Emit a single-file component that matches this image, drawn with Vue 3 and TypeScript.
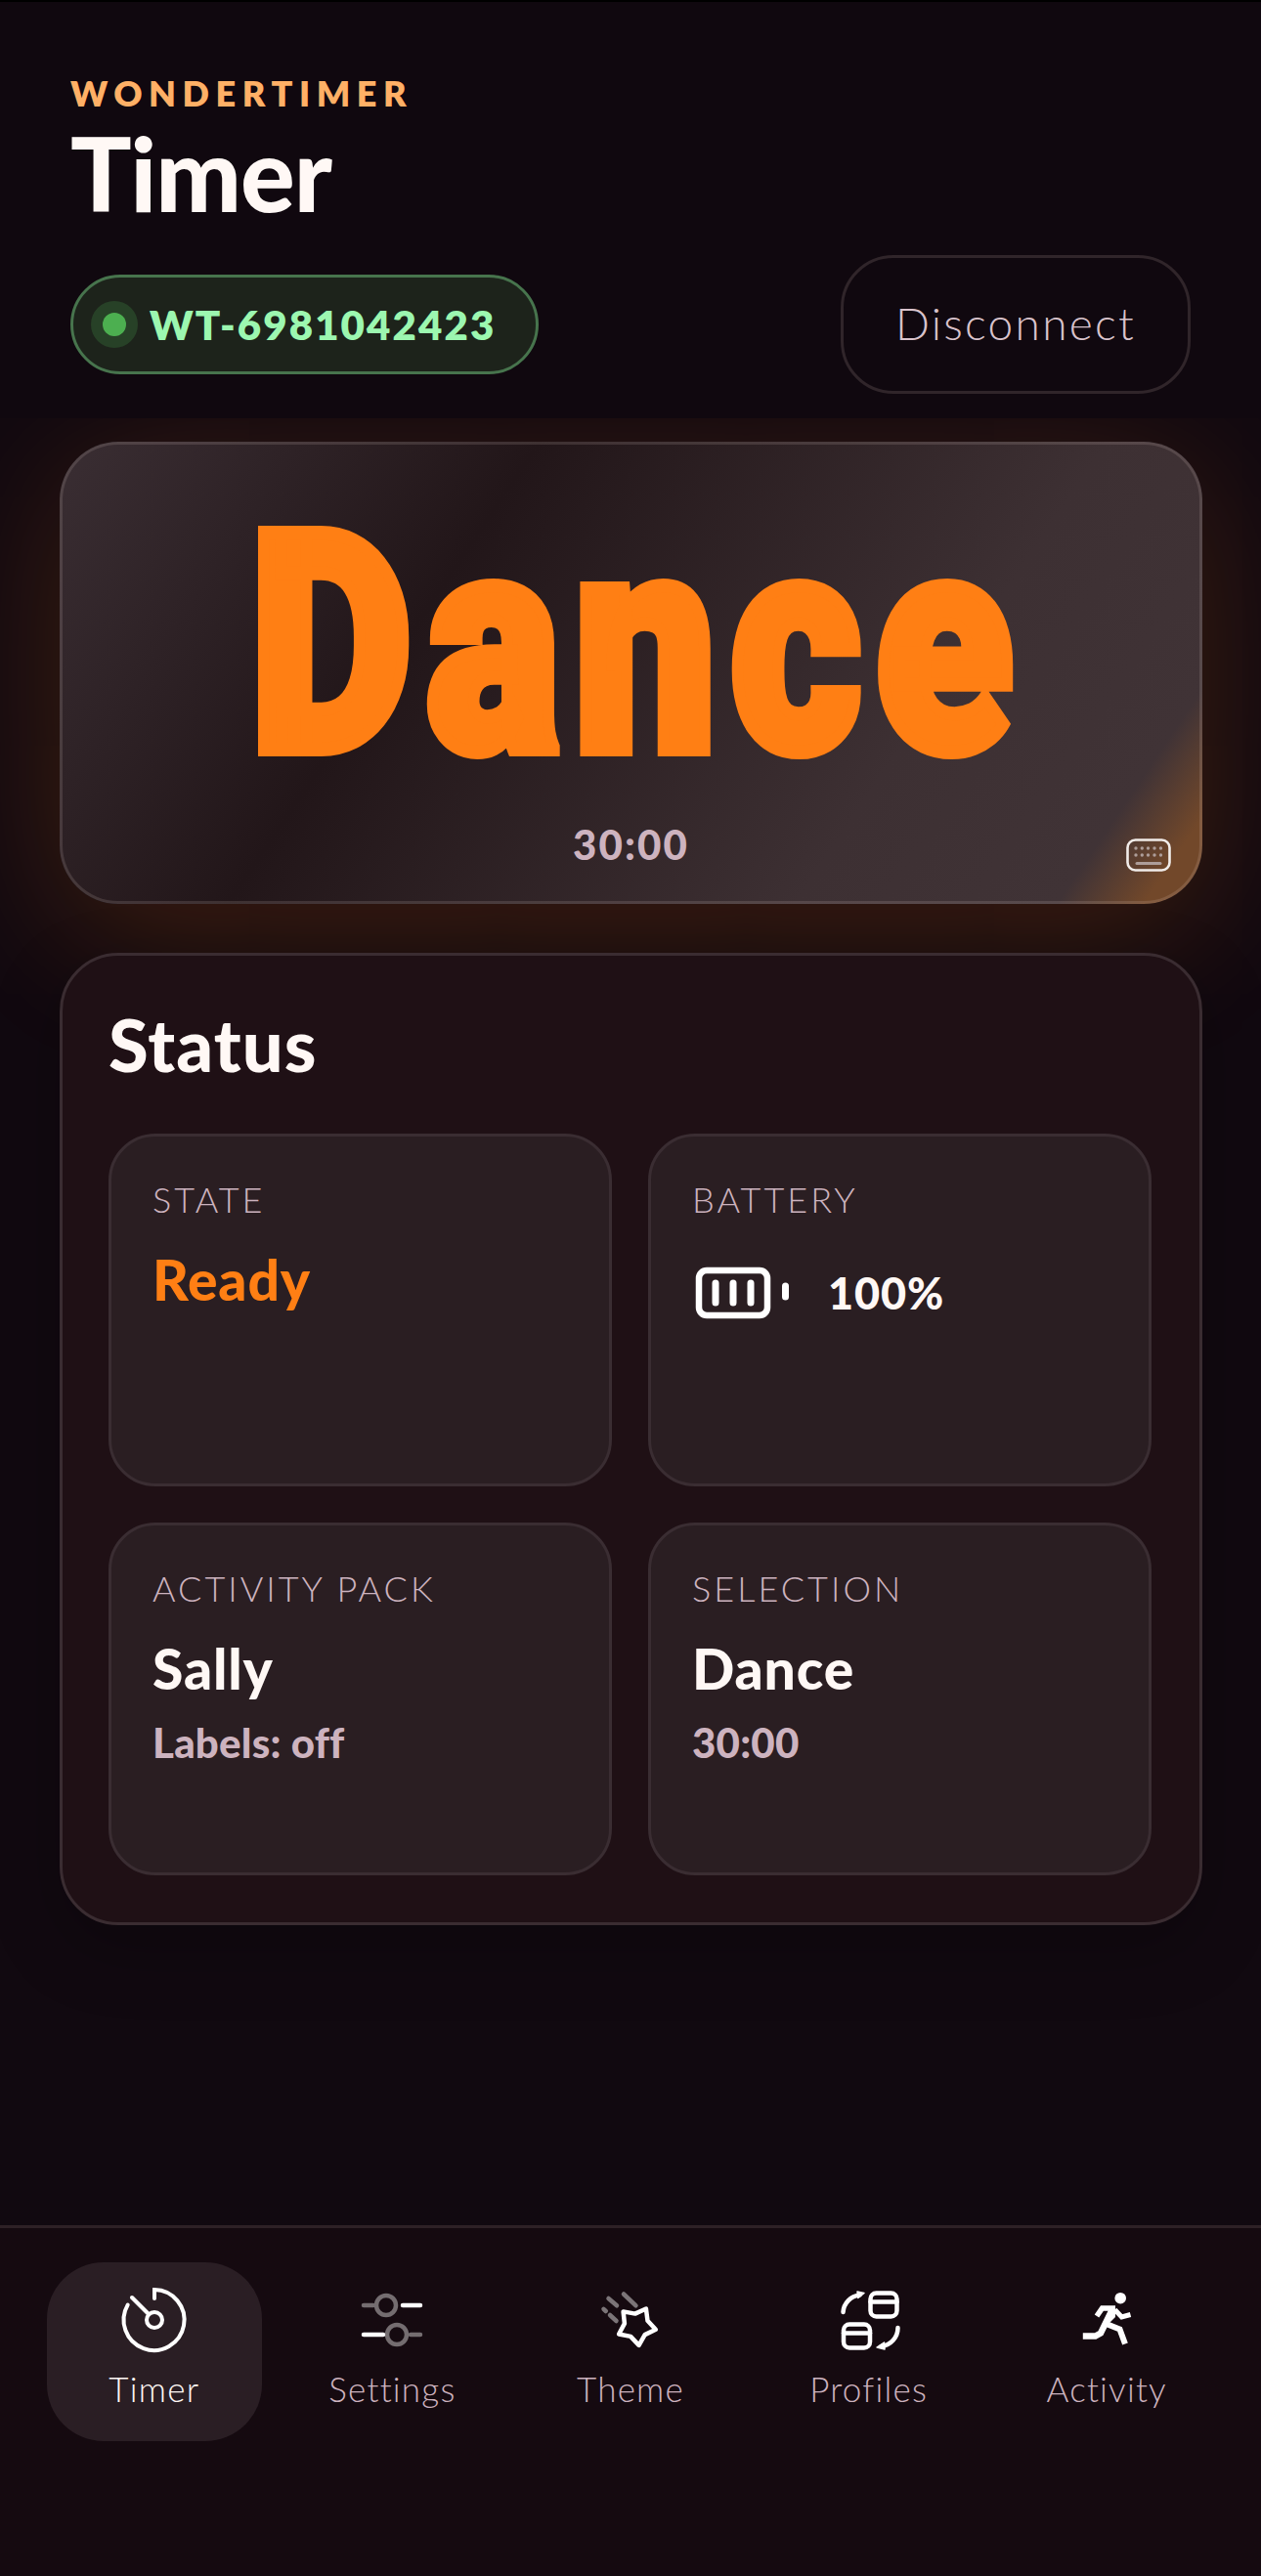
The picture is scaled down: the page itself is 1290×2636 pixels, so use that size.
<script setup lang="ts">
const keyXs: number[] = [10, 16.3, 22.5, 29, 35.5]
const keyYs: number[] = [10, 17]
</script>

<template>
  <div class="app">
    <header class="top">
      <p class="eyebrow">WONDERTIMER</p>
      <h1 class="title">Timer</h1>
      <div class="row">
        <div class="pill">
          <span class="dot"></span>
          <span class="pill-text">WT-6981042423</span>
        </div>
        <button class="disconnect">Disconnect</button>
      </div>
    </header>

    <main class="main">
      <section class="hero">
        <div class="hero-word"><span>Dance</span></div>
        <div class="hero-time">30:00</div>
        <svg class="kbd" width="46" height="34" viewBox="0 0 46 34" fill="none">
          <rect x="1.5" y="1.5" width="43" height="31" rx="8" stroke="#f1ece9" stroke-width="2.6" />
          <g v-for="y in keyYs" :key="y">
            <circle v-for="x in keyXs" :key="x" :cx="x" :cy="y" r="1.7" fill="#ad9d99" />
          </g>
          <path d="M11 25.5h24" stroke="#ad9d99" stroke-width="3" stroke-linecap="round" />
        </svg>
      </section>

      <section class="panel">
        <h2 class="panel-title">Status</h2>
        <div class="grid">
          <div class="card">
            <div class="label">STATE</div>
            <div class="value orange">Ready</div>
          </div>
          <div class="card">
            <div class="label">BATTERY</div>
            <div class="battery">
              <svg class="battery-icon" width="98" height="54" viewBox="0 0 98 54" fill="none">
                <rect x="4" y="4" width="70" height="46" rx="8" stroke="#fff" stroke-width="6.5" />
                <path d="M21 17v20M39 17v20M57 17v20" stroke="#fff" stroke-width="7" stroke-linecap="round" />
                <path d="M92.500 20v11" stroke="#fff" stroke-width="7" stroke-linecap="round" />
              </svg>
              <span class="battery-text">100%</span>
            </div>
          </div>
          <div class="card">
            <div class="label">ACTIVITY PACK</div>
            <div class="value">Sally</div>
            <div class="sub">Labels: off</div>
          </div>
          <div class="card">
            <div class="label">SELECTION</div>
            <div class="value">Dance</div>
            <div class="sub">30:00</div>
          </div>
        </div>
      </section>
    </main>

    <nav class="tabs">
      <div class="tab active">
        <svg class="icon" width="80" height="80" viewBox="0 0 80 80" fill="none" stroke="#fff" stroke-width="4" stroke-linecap="round">
          <path d="M40 18V9a31 31 0 1 1-27.300 15.500" />
          <path d="M17 17l17 17" />
          <circle cx="40" cy="40" r="8" />
        </svg>
        <span class="tab-label">Timer</span>
      </div>
      <div class="tab">
        <svg class="icon" width="80" height="80" viewBox="0 0 80 80" fill="none" stroke-width="4.500" stroke-linecap="round">
          <g stroke="#746d70">
            <path d="M11 25h10M59 55h10" />
            <circle cx="34" cy="25" r="10" />
            <circle cx="45" cy="55" r="10" />
          </g>
          <path d="M51 25h18M11 55h20" stroke="#fff" />
        </svg>
        <span class="tab-label">Settings</span>
      </div>
      <div class="tab">
        <svg class="icon" width="80" height="80" viewBox="0 0 80 80" fill="none" stroke-linecap="round" stroke-linejoin="round">
          <path d="M17.500 18l8.500 7.300M33 13.500l12.500 11.800M12.500 28.800l2.300 2.200M19 35l6.500 6" stroke="#7b7578" stroke-width="4.500" />
          <path d="M55.900 28.500L57.500 40.700 65.800 49.800 54.700 55.100 48.600 65.900 40.100 56.900 28.100 54.500 33.900 43.600 32.600 31.400 44.700 33.600z" stroke="#fff" stroke-width="4.500" />
        </svg>
        <span class="tab-label">Theme</span>
      </div>
      <div class="tab">
        <svg class="icon" width="80" height="80" viewBox="0 0 80 80" fill="none" stroke="#fff" stroke-width="4.500" stroke-linecap="round" stroke-linejoin="round">
          <rect x="41.500" y="12.500" width="27" height="24" rx="6" />
          <path d="M41.500 21.500h27" />
          <rect x="14" y="44.500" width="27" height="24" rx="6" />
          <path d="M14 53.500h27" />
          <path d="M13.500 32a19 19 0 0 1 17-17.500" />
          <path d="M69.500 48a19 19 0 0 1-17 19" />
          <path d="M35 12.500L28 11l.8 6.500z" fill="#fff" stroke-width="1.500" />
          <path d="M48 68l7.500-5 .5 7z" fill="#fff" stroke-width="1.500" />
        </svg>
        <span class="tab-label">Profiles</span>
      </div>
      <div class="tab">
        <svg class="icon" width="80" height="80" viewBox="0 0 80 80" fill="none" stroke="#fff" stroke-linejoin="miter">
          <circle cx="54.200" cy="17.700" r="5.800" fill="#fff" stroke="none" />
          <path d="M49 28H35.500L30 36" stroke-width="5.500" />
          <path d="M48.500 29.500L55.500 37l9-2.500" stroke-width="5" />
          <path d="M46 29L34 53.500l-5.500 3H15.800" stroke-width="6.500" />
          <path d="M41 44.500l12.500 5 5.500 15" stroke-width="6" />
          <path d="M44 29h5v8l-6 6z" fill="#fff" stroke="none" />
        </svg>
        <span class="tab-label">Activity</span>
      </div>
    </nav>
  </div>
</template>

<style>
html,
body {
  margin: 0;
  background: #100810;
}
</style>

<style scoped>
.app {
  width: 1290px;
  height: 2636px;
  display: flex;
  flex-direction: column;
  background: #100810;
  font-family: Lato, "Noto Sans", sans-serif;
  color: #fff8f5;
  overflow: hidden;
}

.top {
  height: 428px;
  box-sizing: border-box;
  flex: none;
  padding: 0 72px;
  border-top: 2px solid #000;
  background: #10080f;
  position: relative;
  z-index: 2;
}

.eyebrow {
  margin: 71px 0 0;
  font-size: 36px;
  line-height: 44px;
  font-weight: 800;
  letter-spacing: 0.182em;
  color: #ffb066;
}

.title {
  margin: 7px 0 0;
  font-size: 104px;
  line-height: 106px;
  font-weight: 900;
  letter-spacing: -0.01em;
  color: #fff8f5;
}

.row {
  display: flex;
  justify-content: space-between;
  align-items: center;
  margin-top: 31px;
}

.pill {
  box-sizing: border-box;
  width: 479px;
  height: 102px;
  display: flex;
  align-items: center;
  gap: 24px;
  padding-left: 30px;
  border: 3px solid #47744d;
  border-radius: 51px;
  background: #1d231b;
}

.dot {
  width: 24px;
  height: 24px;
  border-radius: 50%;
  background: #4caf50;
  box-shadow: 0 0 0 12px rgba(76, 175, 80, 0.22);
  flex: none;
}

.pill-text {
  font-size: 42px;
  font-weight: 800;
  letter-spacing: 0.05em;
  color: #9cf7b0;
}

.disconnect {
  box-sizing: border-box;
  width: 358px;
  height: 142px;
  padding: 0 0 4px;
  border: 3px solid #30252a;
  border-radius: 54px;
  background: transparent;
  font-family: inherit;
  font-size: 46px;
  font-weight: 300;
  letter-spacing: 0.05em;
  color: #d9c3cc;
}

.main {
  flex: 1;
  min-height: 0;
  overflow: hidden;
  box-sizing: border-box;
  padding: 24px 60px 0 61px;
  display: flex;
  flex-direction: column;
  gap: 50px;
  background: #110910;
}

.hero {
  position: relative;
  box-sizing: border-box;
  height: 473px;
  flex: none;
  border: 3px solid rgba(255, 235, 225, 0.13);
  border-radius: 60px;
  background-origin: border-box;
  background-image: linear-gradient(124deg, #3a2e33 0%, #221619 33%, #3d3033 72%, #403336 90%, #72482a 96%);
  box-shadow: 0 30px 150px rgba(255, 125, 20, 0.2);
}

.hero-word {
  position: absolute;
  left: 0;
  right: 0;
  top: 88px;
  height: 236px;
  display: flex;
  justify-content: center;
  align-items: center;
}

.hero-word span {
  display: block;
  padding-left: 16px;
  font-family: Roboto, Inter, sans-serif;
  font-size: 262px;
  line-height: 184px;
  font-weight: 900;
  letter-spacing: 16px;
  color: #ff7f14;
  -webkit-text-stroke: 12px #ff7f14;
  transform: scale(0.975, 1.19);
}

.hero-time {
  position: absolute;
  left: 0;
  right: 0;
  top: 385px;
  text-align: center;
  font-size: 42px;
  line-height: 48px;
  font-weight: 900;
  letter-spacing: 0.05em;
  color: #cdb3bf;
}

.kbd {
  position: absolute;
  right: 29px;
  bottom: 30px;
}

.panel {
  box-sizing: border-box;
  height: 995px;
  flex: none;
  padding: 47px 49px 0 47px;
  border: 3px solid #3a2c31;
  border-radius: 60px;
  background: #1f1015;
  box-shadow: 0 24px 70px rgba(0, 0, 0, 0.25);
  position: relative;
}

.panel-title {
  margin: 1px 0 48px;
  font-size: 74px;
  line-height: 86px;
  font-weight: 900;
  letter-spacing: 0.015em;
  color: #fff8f5;
}

.grid {
  display: grid;
  grid-template-columns: 1fr 1fr;
  grid-auto-rows: 361px;
  gap: 37px;
}

.card {
  box-sizing: border-box;
  padding: 42px 40px 0 42px;
  border: 3px solid #3a2d32;
  border-radius: 48px;
  background: #2a1e22;
}

.label {
  font-size: 36px;
  line-height: 44px;
  font-weight: 300;
  letter-spacing: 0.084em;
  color: #cdb3bf;
}

.value {
  margin-top: 27px;
  font-size: 57px;
  line-height: 66px;
  font-weight: 900;
  letter-spacing: 0.015em;
  color: #fff8f5;
}

.orange {
  color: #ff7f14;
}

.sub {
  margin-top: 20px;
  font-size: 42px;
  line-height: 46px;
  font-weight: 900;
  letter-spacing: 0.005em;
  color: #cdb3bf;
}

.battery {
  display: flex;
  align-items: center;
  margin-top: 47px;
  gap: 38px;
}

.battery-icon {
  margin-left: 3px;
}

.battery-text {
  font-size: 45px;
  line-height: 54px;
  font-weight: 900;
  letter-spacing: 0.02em;
  color: #fff8f5;
}

.tabs {
  flex: none;
  box-sizing: border-box;
  height: 359px;
  padding: 35px 48px 0;
  display: grid;
  grid-template-columns: repeat(5, 1fr);
  gap: 24px;
  align-items: start;
  border-top: 3px solid #2e2126;
  background: #150a10;
  position: relative;
  z-index: 2;
}

.tab {
  height: 183px;
  border-radius: 58px;
  display: flex;
  flex-direction: column;
  align-items: center;
  padding-top: 19px;
  box-sizing: border-box;
}

.tab.active {
  background: #2a1e24;
}

.tab-label {
  margin-top: 10px;
  font-size: 35px;
  line-height: 40px;
  font-weight: 300;
  letter-spacing: 0.035em;
  color: #cdb3bf;
}

.tab.active .tab-label {
  color: #fff8f5;
}
</style>
